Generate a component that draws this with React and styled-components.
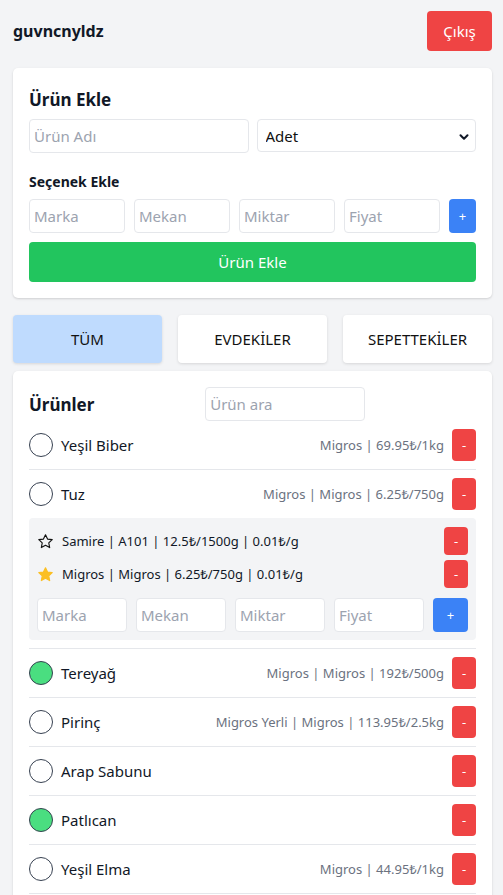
import styled, { createGlobalStyle } from "styled-components";
import { ChevronDown } from "lucide-react";

const GlobalStyle = createGlobalStyle`
	* { box-sizing: border-box; }
	body {
		margin: 0;
		background: #f3f4f6;
		font-family: "Noto Sans", "Open Sans", sans-serif;
		color: #111827;
	}
	input, select, button { font-family: inherit; }
`;

const Page = styled.div`
	padding: 11px 11px 0 13px;
`;

const Header = styled.header`
	display: flex;
	justify-content: space-between;
	align-items: center;
	margin-bottom: 17px;
`;

const UserName = styled.h1`
	margin: 0;
	font-size: 16px;
	font-weight: 700;
`;

const Button = styled.button`
	border: none;
	border-radius: 4px;
	color: #fff;
	cursor: pointer;
	background: ${(p) => (p.$color === "green" ? "#22c55e" : p.$color === "blue" ? "#3b82f6" : "#ef4444")};
	font-size: ${(p) => p.$size || 15}px;
	width: ${(p) => (p.$w ? `${p.$w}px` : "auto")};
	height: ${(p) => p.$h || 40}px;
	padding: 0;
	flex-shrink: 0;
`;

const Card = styled.section`
	background: #fff;
	border-radius: 5px;
	box-shadow: 0 1px 3px rgba(0, 0, 0, 0.1), 0 1px 2px rgba(0, 0, 0, 0.06);
	padding: 16px;
	width: 479px;
`;

const CardTitle = styled.h2`
	margin: ${(p) => (p.$flush ? "0" : "4px 0 8px")};
	font-size: 17px;
	font-weight: 700;
`;

const SubTitle = styled.h3`
	margin: 19px 0 8px;
	font-size: 14px;
	font-weight: 700;
`;

const Row = styled.div`
	display: flex;
	gap: ${(p) => p.$gap || 8}px;
	align-items: stretch;
`;

const TwoCols = styled.div`
	display: grid;
	grid-template-columns: 1fr 1fr;
	gap: 8px;
`;

const Input = styled.input`
	flex: 1;
	min-width: 0;
	width: 100%;
	height: 34px;
	border: 1px solid #e5e7eb;
	border-radius: 4px;
	padding: 0 4px;
	font-size: 15px;
	color: #111827;
	background: #fff;
	&::placeholder { color: #9ca3af; }
	outline: none;
`;

const SelectWrap = styled.div`
	position: relative;
	svg {
		position: absolute;
		right: 5px;
		top: 11px;
		pointer-events: none;
	}
`;

const Select = styled.select`
	appearance: none;
	width: 100%;
	height: 33px;
	border: 1px solid #e5e7eb;
	border-radius: 4px;
	padding: 0 8px;
	font-size: 15px;
	color: #111;
	background: #fff;
`;

const AddButton = styled(Button)`
	width: 100%;
	margin-top: 9px;
	font-size: 15px;
`;

const Tabs = styled.nav`
	display: grid;
	grid-template-columns: repeat(3, 149px);
	gap: 16px;
	margin: 17px 0 8px;
`;

const Tab = styled.button`
	height: 48px;
	border: none;
	border-radius: 4px;
	background: ${(p) => (p.$active ? "#bfdbfe" : "#fff")};
	box-shadow: 0 1px 3px rgba(0, 0, 0, 0.12);
	font-size: 15px;
	color: #111;
	padding: 0;
`;

const ListHeader = styled.div`
	display: flex;
	justify-content: space-between;
	align-items: center;
`;

const SearchInput = styled(Input)`
	flex: none;
	width: 160px;
`;

const List = styled.ul`
	list-style: none;
	margin: 0;
	padding: 0;
`;

const Item = styled.li`
	padding: 8px 0;
	border-bottom: 1px solid #e5e7eb;
`;

const ItemRow = styled.div`
	display: flex;
	align-items: center;
	gap: 8px;
`;

const Check = styled.span`
	width: 24px;
	height: 24px;
	border-radius: 50%;
	border: 1.5px solid #374151;
	background: ${(p) => (p.$done ? "#4ade80" : "#fff")};
	flex-shrink: 0;
`;

const ItemName = styled.span`
	font-size: 15px;
	flex: 1;
`;

const Meta = styled.span`
	font-size: 13px;
	color: #6b7280;
`;

const Panel = styled.div`
	margin-top: 8px;
	background: #f3f4f6;
	border-radius: 4px;
	padding: 9px 8px 8px 8px;
`;

const OptionRow = styled.div`
	display: flex;
	align-items: center;
	gap: 8px;
	margin-bottom: 5px;
	font-size: 13px;
	span { flex: 1; }
`;

const PanelInputs = styled.div`
	margin-top: 10px;
`;

const products = [
	{ name: "Yeşil Biber", meta: "Migros | 69.95₺/1kg" },
	{
		name: "Tuz",
		meta: "Migros | Migros | 6.25₺/750g",
		options: [
			{ text: "Samire | A101 | 12.5₺/1500g | 0.01₺/g", fav: false },
			{ text: "Migros | Migros | 6.25₺/750g | 0.01₺/g", fav: true },
		],
	},
	{ name: "Tereyağ", meta: "Migros | Migros | 192₺/500g", done: true },
	{ name: "Pirinç", meta: "Migros Yerli | Migros | 113.95₺/2.5kg" },
	{ name: "Arap Sabunu" },
	{ name: "Patlıcan", done: true },
	{ name: "Yeşil Elma", meta: "Migros | 44.95₺/1kg" },
];

const Star = ({ filled }) => (
	<svg width="17" height="17" viewBox="0 0 24 24" style={{ flexShrink: 0 }}>
		<path
			d="M12 2.5l2.9 6.1 6.6.8-4.9 4.6 1.3 6.6L12 17.3l-5.9 3.3 1.3-6.6-4.9-4.6 6.6-.8z"
			fill={filled ? "#fbbf24" : "none"}
			stroke={filled ? "#fbbf24" : "#111"}
			strokeWidth="1.6"
			strokeLinejoin="round"
		/>
	</svg>
);

const OptionInputs = ({ gap, btnW }) => (
	<Row $gap={gap}>
		<Input placeholder="Marka" />
		<Input placeholder="Mekan" />
		<Input placeholder="Miktar" />
		<Input placeholder="Fiyat" />
		<Button $color="blue" $w={btnW} $h={34} $size={13}>+</Button>
	</Row>
);

const App = () => {
	return (
		<Page>
			<GlobalStyle />
			<Header>
				<UserName>guvncnyldz</UserName>
				<Button $w={65}>Çıkış</Button>
			</Header>

			<Card>
				<CardTitle>Ürün Ekle</CardTitle>
				<TwoCols>
					<Input placeholder="Ürün Adı" />
					<SelectWrap>
						<Select defaultValue="Adet">
							<option>Adet</option>
							<option>Kg</option>
						</Select>
						<ChevronDown size={14} strokeWidth={3.5} />
					</SelectWrap>
				</TwoCols>
				<SubTitle>Seçenek Ekle</SubTitle>
				<OptionInputs gap={9} btnW={27} />
				<AddButton $color="green">Ürün Ekle</AddButton>
			</Card>

			<Tabs>
				<Tab $active>TÜM</Tab>
				<Tab>EVDEKİLER</Tab>
				<Tab>SEPETTEKİLER</Tab>
			</Tabs>

			<Card>
				<ListHeader>
					<CardTitle $flush>Ürünler</CardTitle>
					<SearchInput placeholder="Ürün ara" />
					<span />
				</ListHeader>
				<List>
					{products.map((p) => (
						<Item key={p.name}>
							<ItemRow>
								<Check $done={p.done} />
								<ItemName>{p.name}</ItemName>
								{p.meta && <Meta>{p.meta}</Meta>}
								<Button $w={24} $h={32} $size={13}>-</Button>
							</ItemRow>
							{p.options && (
								<Panel>
									{p.options.map((o) => (
										<OptionRow key={o.text}>
											<Star filled={o.fav} />
											<span>{o.text}</span>
											<Button $w={24} $h={28} $size={13}>-</Button>
										</OptionRow>
									))}
									<PanelInputs>
										<OptionInputs gap={9} btnW={35} />
									</PanelInputs>
								</Panel>
							)}
						</Item>
					))}
				</List>
			</Card>
		</Page>
	);
};

export default App;
